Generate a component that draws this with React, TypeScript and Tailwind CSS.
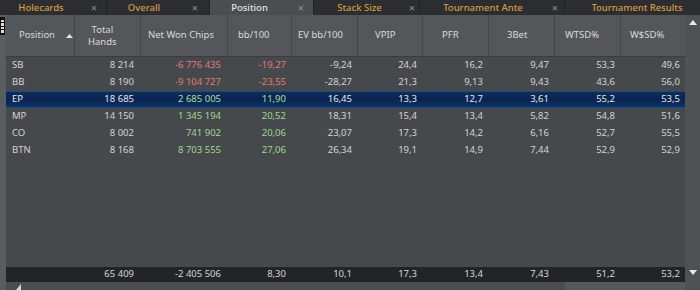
import React from "react";

const cols = "grid grid-cols-[69px_66px_87px_64px_66px_65px_66px_66px_66px_64px]";

type Row = { pos: string; v: string[]; c?: "r" | "g"; sel?: boolean };
const rows: Row[] = [
  { pos: "SB", v: ["8 214", "-6 776 435", "-19,27", "-9,24", "24,4", "16,2", "9,47", "53,3", "49,6"], c: "r" },
  { pos: "BB", v: ["8 190", "-9 104 727", "-23,55", "-28,27", "21,3", "9,13", "9,43", "43,6", "56,0"], c: "r" },
  { pos: "EP", v: ["18 685", "2 685 005", "11,90", "16,45", "13,3", "12,7", "3,61", "55,2", "53,5"], c: "g", sel: true },
  { pos: "MP", v: ["14 150", "1 345 194", "20,52", "18,31", "15,4", "13,4", "5,82", "54,8", "51,6"], c: "g" },
  { pos: "CO", v: ["8 002", "741 902", "20,06", "23,07", "17,3", "14,2", "6,16", "52,7", "55,5"], c: "g" },
  { pos: "BTN", v: ["8 168", "8 703 555", "27,06", "26,34", "19,1", "14,9", "7,44", "52,9", "52,9"], c: "g" },
];
const totals = ["65 409", "-2 405 506", "8,30", "10,1", "17,3", "13,4", "7,43", "51,2", "53,2"];

const tabs = [
  { t: "Holecards", w: "w-[107px]", x: "w-[24px]" },
  { t: "Overall", w: "w-[103px]", x: "w-[28px]" },
  { t: "Position", w: "w-[104px]", x: "w-[24px]", active: true },
  { t: "Stack Size", w: "w-[106px]", x: "w-[14px]" },
  { t: "Tournament Ante", w: "w-[145px]", x: "w-[18px]" },
  { t: "Tournament Results", w: "w-[145px]", x: "" },
];

const headers: { t: React.ReactNode; pl: string }[] = [
  { t: "Position", pl: "pl-[13px]" },
  { t: <span className="block text-center leading-[12px]">Total<br />Hands</span>, pl: "pl-[13px]" },
  { t: "Net Won Chips", pl: "pl-[7px]" },
  { t: "bb/100", pl: "pl-[10px]" },
  { t: "EV bb/100", pl: "pl-[6px]" },
  { t: "VPIP", pl: "pl-[17px]" },
  { t: "PFR", pl: "pl-[19px]" },
  { t: "3Bet", pl: "pl-[18px]" },
  { t: "WTSD%", pl: "pl-[10px]" },
  { t: "W$SD%", pl: "pl-[9px]" },
];

export default function App() {
  return (
    <div
      className="w-[700px] h-[290px] overflow-hidden bg-[#46494c] flex flex-col text-[9.5px] text-[#d2d4d6]"
      style={{ fontFamily: '"Noto Sans", "Open Sans", sans-serif' }}
    >
      {/* Tabs */}
      <div className="h-[15px] flex bg-[#2b2d30] shrink-0 overflow-hidden">
        {tabs.map((tb) => (
          <div
            key={tb.t}
            className={`${tb.w} shrink-0 flex items-center border-r border-[#1f2123] whitespace-nowrap ${tb.active ? "bg-[#4b4e51] text-[#e0e2e4]" : "bg-[#2b2d30] text-[#d89b3c]"}`}
          >
            <span className="flex-1 text-center font-medium text-[9.5px] leading-none">{tb.t}</span>
            {tb.x && (
              <span className={`${tb.x} text-center text-[11px] text-[#8e9093] leading-none`}>×</span>
            )}
          </div>
        ))}
      </div>

      <div className="flex-1 flex min-h-0">
        {/* left strip */}
        <div className="w-[6px] bg-[#5a5d60] shrink-0 flex flex-col">
          <div className="h-[2px]" />
          <div className="w-[5px] h-[18px] bg-[#111] flex flex-col items-center justify-center gap-[1px]">
            <div className="w-[3px] h-[2px] bg-[#ddd]" />
            <div className="w-[3px] h-[3px] bg-[#ddd]" />
            <div className="w-[3px] h-[2px] bg-[#ddd]" />
            <div className="w-[3px] h-[3px] bg-[#ddd]" />
          </div>
        </div>

        {/* table */}
        <div className="w-[679px] flex flex-col">
          <div className={`${cols} h-[42px] bg-[#54575a] border-b border-[#3a3c3f] shrink-0`}>
            {headers.map((h, i) => (
              <div key={i} className={`flex items-center ${h.pl} border-r border-[#45484b] text-[#d8dadc] ${i === 9 ? "border-r-0" : ""}`}>
                {h.t}
                {i === 0 && (
                  <svg width="7" height="4" viewBox="0 0 7 4" className="ml-[11px]">
                    <path d="M0 4 L3.5 0 L7 4 Z" fill="#e6e6e6" />
                  </svg>
                )}
              </div>
            ))}
          </div>

          <div className="flex flex-col">
            {rows.map((r) => (
              <div
                key={r.pos}
                className={`${cols} h-[17px] items-center ${r.sel ? "bg-gradient-to-b from-[#0d2d5c] via-[#0a2350] to-[#0f3467] border-y border-[#1e4a80] text-[#e4e6e8]" : ""}`}
              >
                <div className="pl-[6px]">{r.pos}</div>
                {r.v.map((v, i) => {
                  const colored = (i === 1 || i === 2) && !r.sel ? (r.c === "r" ? "text-[#e07a76]" : "text-[#9ed890]") : (i === 1 || i === 2) && r.sel ? "text-[#a8e09a]" : "";
                  const pr = i === 0 ? "pr-[7px]" : i === 1 ? "pr-[7px]" : i === 8 ? "pr-[5px]" : "pr-[6px]";
                  return (
                    <div key={i} className={`text-right ${pr} ${colored}`}>
                      {v}
                    </div>
                  );
                })}
              </div>
            ))}
          </div>

          <div className="flex-1" />

          <div className={`${cols} h-[15px] items-center bg-[#222527] text-[#d4d6d8] shrink-0`}>
            <div />
            {totals.map((v, i) => {
              const pr = i === 8 ? "pr-[5px]" : i < 2 ? "pr-[7px]" : "pr-[6px]";
              return (
                <div key={i} className={`text-right ${pr}`}>
                  {v}
                </div>
              );
            })}
          </div>

          <div className="h-[8px] bg-[#4a4d50] flex shrink-0">
            <div className="w-[6px]" />
            <svg width="5" height="8" viewBox="0 0 5 8" className="ml-[4px]">
              <path d="M5 2 L5 8 L0 8 Z" fill="#d8d8d8" />
            </svg>
            <div className="flex-1" />
            <div className="w-[120px] bg-[#56595c]" />
          </div>
        </div>

        {/* right scrollbar */}
        <div className="w-[15px] bg-[#4f5255] flex flex-col items-center shrink-0">
          <div className="h-[5px]" />
          <svg width="8" height="5" viewBox="0 0 8 5">
            <path d="M0 5 L4 0 L8 5 Z" fill="#e8e8e8" />
          </svg>
          <div className="flex-1" />
          <svg width="8" height="5" viewBox="0 0 8 5" className="mb-[15px]">
            <path d="M0 0 L8 0 L4 5 Z" fill="#e8e8e8" />
          </svg>
        </div>
      </div>
    </div>
  );
}
